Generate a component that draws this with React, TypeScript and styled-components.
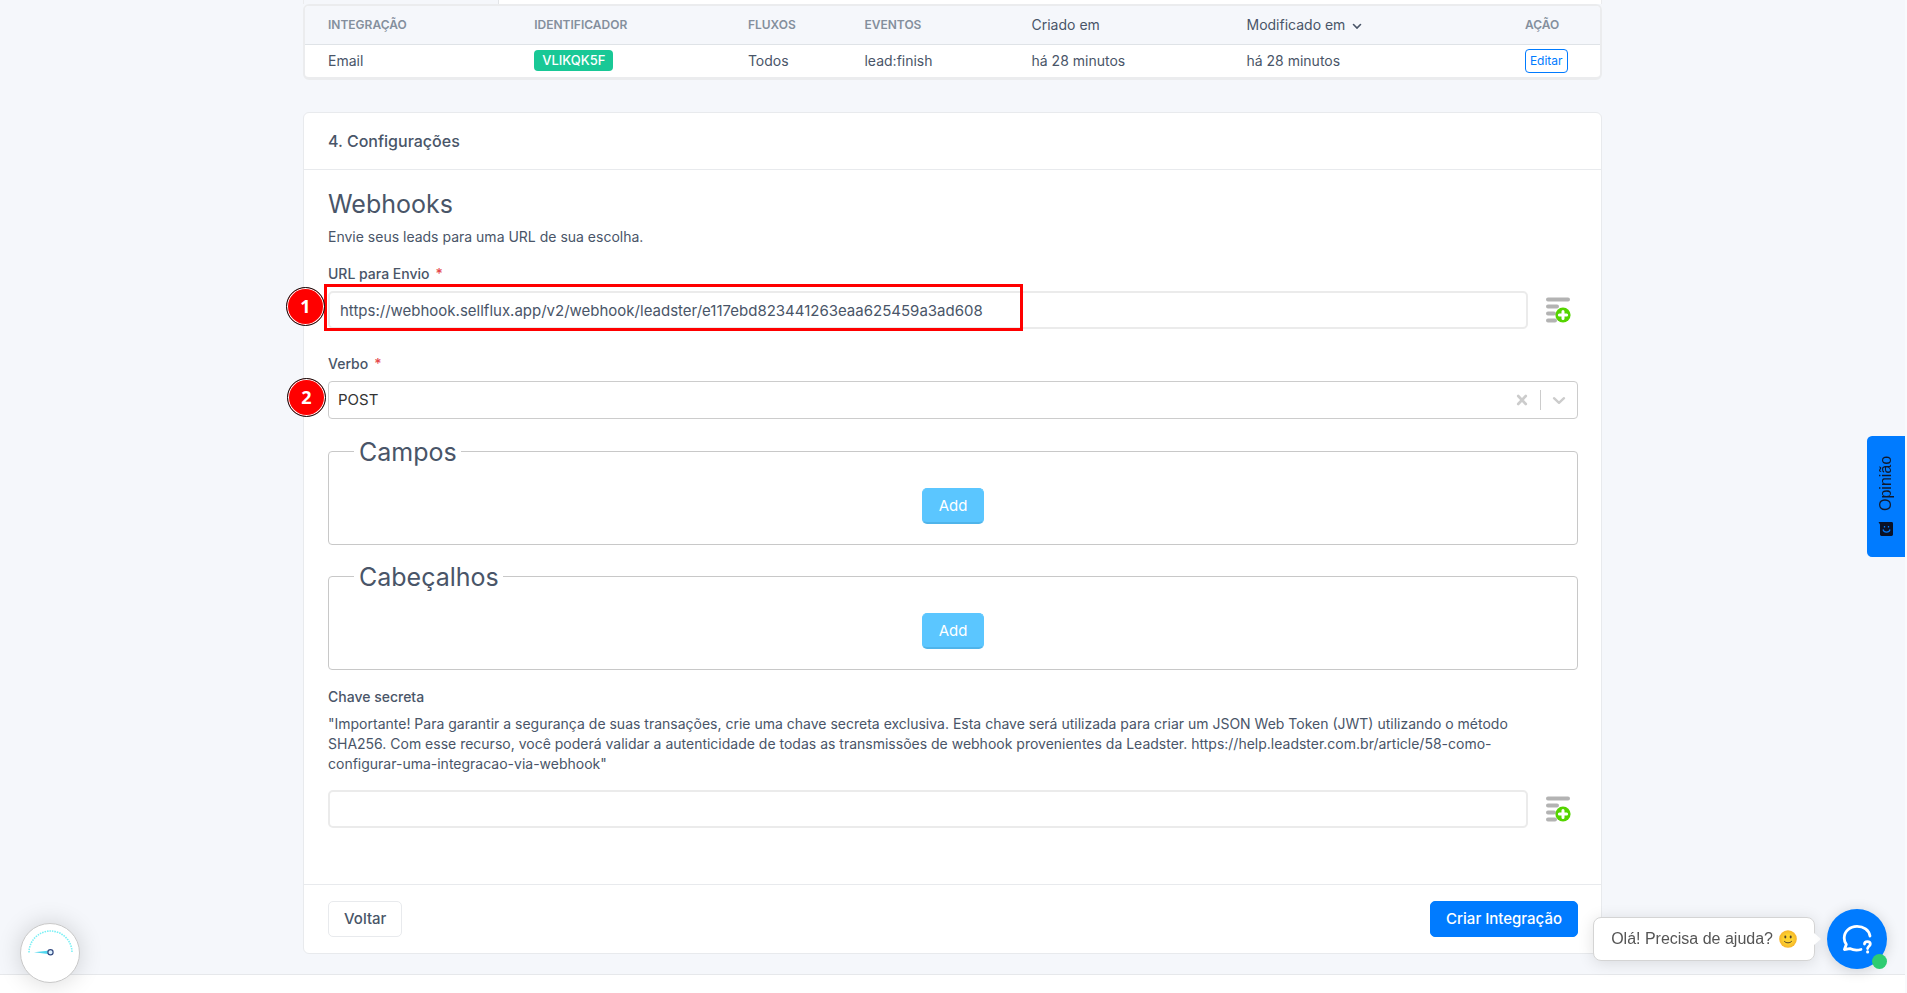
import React from 'react';
import styled, { createGlobalStyle } from 'styled-components';

const GlobalStyle = createGlobalStyle`
  *, *::before, *::after { box-sizing: border-box; }
  body {
    margin: 0;
    background: #f9fafc;
    color: #495568;
    font-family: Inter, 'Liberation Sans', sans-serif;
    font-size: 14px;
    line-height: 20px;
  }
  h1, h2, p { margin: 0; }
  button, input, select { font: inherit; color: inherit; }
  button { cursor: pointer; }
`;

const Page = styled.div`
  min-height: 100vh;
  margin-right: 2px;
  background: #f5f7fb;
  display: flex;
  flex-direction: column;
  justify-content: space-between;
`;

const Container = styled.main`
  width: 100%;
  max-width: 1299px;
  margin: 0 auto;
`;

const TabStrip = styled.div`
  height: 4px;
  display: flex;
  border: solid #ebecee;
  border-width: 0 1px;
  background: #fff;
`;

const TabEnd = styled.div`
  width: 15%;
  border-right: 1px solid #e3e5e8;
  background: #f5f7fb;
`;

const TableCard = styled.section`
  border: 2px solid #ebecee;
  border-bottom-width: 3px;
  border-radius: 6px;
  background: #fff;
  overflow: hidden;
`;

const Table = styled.table`
  width: 100%;
  border-collapse: collapse;
  table-layout: fixed;
`;

const HeadCell = styled.th<{ $plain?: boolean; $width: string }>`
  width: ${(p) => p.$width};
  height: 38px;
  padding: 0 13px;
  text-align: left;
  background: #f5f7fb;
  border-bottom: 1px solid #dfe3e7;
  font-size: ${(p) => (p.$plain ? '14px' : '12px')};
  font-weight: ${(p) => (p.$plain ? 400 : 600)};
  color: ${(p) => (p.$plain ? '#495568' : '#848f9d')};
  white-space: nowrap;
  &:first-child { padding-left: 23px; }
`;

const Cell = styled.td`
  height: 33px;
  padding: 0 13px;
  white-space: nowrap;
  &:first-child { padding-left: 23px; }
`;

const SortIcon = styled.svg`
  margin-left: 7px;
  vertical-align: middle;
`;

const Badge = styled.span`
  display: inline-block;
  padding: 0 8px;
  border-radius: 4px;
  background: #19c896;
  color: #fff;
  font-size: 13px;
  font-weight: 500;
  line-height: 21px;
`;

const EditButton = styled.button`
  display: block;
  height: 24px;
  padding: 0 4px;
  border: 1px solid #007bff;
  border-radius: 4px;
  background: #fff;
  color: #007bff;
  font-size: 12px;
  line-height: 20px;
`;

const Card = styled.section`
  margin-top: 32px;
  border: 1px solid #e8eaed;
  border-radius: 6px;
  background: #fff;
`;

const CardHeader = styled.header`
  padding: 18px 24px;
  border-bottom: 1px solid #e8eaed;
`;

const CardTitle = styled.h1`
  font-size: 16px;
  font-weight: 500;
  line-height: 20px;
`;

const CardBody = styled.form`
  padding: 19px 23px 56px 24px;
`;

const SectionTitle = styled.h2`
  margin-bottom: 8px;
  font-size: 25px;
  font-weight: 400;
  line-height: 30px;
`;

const Label = styled.label`
  display: block;
  margin-bottom: 7px;
  font-weight: 500;
`;

const Required = styled.span`
  margin-left: 6px;
  color: #e5484d;
`;

const Lead = styled.p`
  margin-bottom: 17px;
`;

const Help = styled.p`
  margin-bottom: 16px;
  padding-right: 18px;
`;

const Field = styled.div`
  margin-bottom: 25px;
`;

const SecretField = styled.div`
  padding-top: 5px;
`;

const InputRow = styled.div`
  position: relative;
  display: flex;
  align-items: center;
  gap: 18px;
  padding-right: 7px;
`;

const TextInput = styled.input`
  flex: 1;
  min-width: 0;
  height: 38px;
  padding: 0 10px;
  border: 2px solid #ebebeb;
  border-radius: 5px;
  background: #fff;
  font-size: 15px;
  outline: none;
`;

const IconButton = styled.button`
  display: flex;
  padding: 0;
  border: 0;
  background: none;
`;

const SelectBox = styled.div`
  position: relative;
  display: flex;
  align-items: center;
  height: 38px;
  margin-bottom: 13px;
  padding-right: 9px;
  border: 1px solid #ccc;
  border-radius: 4px;
  background: #fff;
  color: #ccc;
`;

const Select = styled.select`
  flex: 1;
  height: 100%;
  padding: 0 9px;
  border: 0;
  background: none;
  color: #333;
  font-size: 15px;
  appearance: none;
  outline: none;
`;

const Separator = styled.span`
  width: 1px;
  height: 20px;
  margin: 0 9px 0 8px;
  background: #ccc;
`;

const Group = styled.fieldset`
  margin: 0 0 12px;
  padding: 18px 25px 20px;
  display: flex;
  justify-content: center;
  border: 1px solid #c8c8c8;
  border-radius: 4px;
`;

const Legend = styled.legend`
  padding: 2px 4px 0 5px;
  font-size: 25px;
  line-height: 36px;
`;

const Button = styled.button<{ $kind: 'primary' | 'plain' | 'add' }>`
  height: 36px;
  padding: 0 ${(p) => (p.$kind === 'add' ? '16px' : '15px')};
  border: 1px solid ${(p) => ({ primary: '#007bff', plain: '#e8eaed', add: '#5bc6ff' })[p.$kind]};
  border-bottom: ${(p) => (p.$kind === 'add' ? '2px solid #4fb4ea' : '')};
  border-radius: 5px;
  background: ${(p) => ({ primary: '#007bff', plain: '#fff', add: '#5bc6ff' })[p.$kind]};
  color: ${(p) => (p.$kind === 'plain' ? '#495568' : '#fff')};
  font-size: 15px;
  font-weight: ${(p) => (p.$kind === 'add' ? 400 : 500)};
`;

const CardFooter = styled.footer`
  display: flex;
  justify-content: space-between;
  padding: 16px 23px 16px 24px;
  border-top: 1px solid #e8eaed;
`;

const PageFooter = styled.div`
  height: 19px;
  border-top: 1px solid #e6e8eb;
  background: #fff;
`;

const Highlight = styled.span`
  position: absolute;
  left: -4px;
  top: -7px;
  width: 699px;
  height: 47px;
  border: 3px solid #f00;
  pointer-events: none;
`;

const Step = styled.span`
  position: absolute;
  left: -42px;
  top: -4px;
  width: 39px;
  height: 39px;
  border: 1px solid #111;
  border-radius: 50%;
  background: #f00;
  box-shadow: inset 0 0 0 1px #fff;
  color: #fff;
  font: bold 18px/37px 'Open Sans', sans-serif;
  text-align: center;
`;

const Feedback = styled.button`
  position: fixed;
  right: 2px;
  top: 436px;
  width: 38px;
  height: 121px;
  display: flex;
  align-items: center;
  justify-content: center;
  gap: 10px;
  padding: 0;
  border: 0;
  border-radius: 0 5px 5px 0;
  background: #007bff;
  color: #10182a;
  font-family: 'Liberation Sans', sans-serif;
  font-size: 16px;
  writing-mode: vertical-rl;
  transform: rotate(180deg);
`;

const Gauge = styled.button`
  position: fixed;
  left: 20px;
  bottom: 10px;
  width: 60px;
  height: 60px;
  padding: 0;
  border: 1px solid #c8c8c8;
  border-radius: 50%;
  background: #fff;
  box-shadow: 0 0 24px rgba(0, 0, 0, 0.16);
`;

const Chat = styled.aside`
  position: fixed;
  right: 20px;
  bottom: 24px;
  display: flex;
  align-items: center;
  gap: 12px;
`;

const ChatMessage = styled.div`
  position: relative;
  display: flex;
  align-items: center;
  gap: 6px;
  height: 44px;
  padding: 0 17px;
  border: 1px solid #d4d4d4;
  border-radius: 8px;
  background: #fff;
  box-shadow: 0 2px 16px rgba(0, 0, 0, 0.12);
  color: #555;
  font-family: 'Liberation Sans', sans-serif;
  font-size: 16px;
  &::after {
    content: '';
    position: absolute;
    left: 100%;
    top: 15px;
    border: 6px solid transparent;
    border-left: 7px solid #fff;
  }
`;

const ChatButton = styled.button`
  position: relative;
  width: 60px;
  height: 60px;
  padding: 0;
  border: 0;
  border-radius: 50%;
  background: #007bff;
  box-shadow: 0 2px 14px rgba(0, 0, 0, 0.16);
`;

const Online = styled.span`
  position: absolute;
  right: 0;
  bottom: 0;
  width: 15px;
  height: 15px;
  border-radius: 50%;
  background: #2ecc71;
`;

const AddFieldIcon = () => (
  <svg width="25" height="26" viewBox="0 0 25 26" aria-hidden="true">
    <g stroke="#b3b3b3" strokeWidth="4" strokeLinecap="round">
      <path d="M2 2.5H22M2 9.5H11M2 16.5H8M2 23.5H9" />
    </g>
    <circle cx="17" cy="18" r="7.6" fill="#55d400" />
    <path d="M17 14.4V21.6M13.4 18H20.6" stroke="#fff" strokeWidth="3" strokeLinecap="round" />
  </svg>
);

const CloseIcon = () => (
  <svg width="20" height="20" viewBox="0 0 20 20" stroke="#ccc" strokeWidth="2.6" strokeLinecap="round" aria-hidden="true">
    <path d="M6.2 6L13.8 14M13.8 6L6.2 14" />
  </svg>
);

const ChevronIcon = () => (
  <svg width="18" height="20" viewBox="0 0 18 20" fill="none" stroke="#ccc" strokeWidth="2.4" strokeLinecap="round" strokeLinejoin="round" aria-hidden="true">
    <path d="M4 8.2L9 12.8L14 8.2" />
  </svg>
);

const SmileIcon = () => (
  <svg width="18" height="18" viewBox="0 0 18 18" aria-hidden="true">
    <defs>
      <radialGradient id="face">
        <stop offset="0.5" stopColor="#fdd32f" />
        <stop offset="1" stopColor="#f6b42b" />
      </radialGradient>
    </defs>
    <circle cx="9" cy="9" r="8.8" fill="url(#face)" />
    <ellipse cx="6.3" cy="7" rx="1" ry="1.4" fill="#54402b" />
    <ellipse cx="11.7" cy="7" rx="1" ry="1.4" fill="#54402b" />
    <path d="M5.4 11.4C7 13.4 11 13.4 12.6 11.4" fill="none" stroke="#54402b" strokeWidth="1" strokeLinecap="round" />
  </svg>
);

const ChatIcon = () => (
  <svg width="60" height="60" viewBox="0 0 60 60" fill="none" stroke="#fff" strokeWidth="2.8" strokeLinecap="round" strokeLinejoin="round" aria-hidden="true">
    <path d="M43 27C42 21 36.5 17.4 30 17.4C22.8 17.4 17.2 22.4 17.2 29C17.2 31.5 18 33.6 19.3 35.4L17.4 40.5L22.8 39.6C26.5 41.4 30.5 41.5 34 40.5" />
    <path d="M37.5 35C37.5 33.4 39 32.6 40.4 32.6C42.1 32.6 43.3 33.7 43.3 35.1C43.3 37.3 40.6 37.3 40.6 39.6" />
    <path d="M40.6 42.8V43" strokeWidth="3" />
  </svg>
);

const GaugeIcon = () => (
  <svg width="58" height="58" viewBox="0 0 58 58" aria-hidden="true">
    <path d="M8 28.5A21.5 21.5 0 0 1 51 28.5" fill="none" stroke="#7af0f5" strokeWidth="1.6" strokeDasharray="1.5 1" />
    <path d="M13 28.2L29 26.4V30.2Z" fill="#4fd6ee" />
    <circle cx="29.5" cy="28.2" r="2.6" fill="#dff2ff" stroke="#334a80" strokeWidth="1.2" />
  </svg>
);

const FaceIcon = () => (
  <svg width="16" height="16" viewBox="0 0 16 16" aria-hidden="true">
    <g transform="rotate(180 8 8)">
      <path d="M0.5 1H13.5A1.5 1.5 0 0 1 15 2.5V13.5A1.5 1.5 0 0 1 13.5 15H3.5A1.5 1.5 0 0 1 2 13.5V3.5Z" fill="#0a1226" />
      <path d="M5 8.5C5.8 12 11.2 12 12 8.5" fill="none" stroke="#007bff" strokeWidth="1.2" />
      <path d="M6.5 5V6.5M10.5 5V6.5" stroke="#007bff" strokeWidth="1.3" />
    </g>
  </svg>
);

const columns = [
  { title: 'INTEGRAÇÃO', width: '16.7%' },
  { title: 'IDENTIFICADOR', width: '16.5%' },
  { title: 'FLUXOS', width: '9%' },
  { title: 'EVENTOS', width: '12.9%' },
  { title: 'Criado em', width: '16.6%', plain: true },
  { title: 'Modificado em', width: '21.5%', plain: true, sorted: true },
  { title: 'AÇÃO', width: '6.8%' },
];

export default function App() {
  return (
    <>
      <GlobalStyle />
      <Page>
        <Container>
          <TabStrip>
            <TabEnd />
          </TabStrip>
          <TableCard>
            <Table>
              <thead>
                <tr>
                  {columns.map((c) => (
                    <HeadCell key={c.title} $width={c.width} $plain={c.plain} scope="col">
                      {c.title}
                      {c.sorted && (
                        <SortIcon width="10" height="10" viewBox="0 0 10 10" fill="none" stroke="#495568" strokeWidth="1.6" strokeLinecap="round" aria-hidden="true">
                          <path d="M1.5 3.5L5 7L8.5 3.5" />
                        </SortIcon>
                      )}
                    </HeadCell>
                  ))}
                </tr>
              </thead>
              <tbody>
                <tr>
                  <Cell>Email</Cell>
                  <Cell>
                    <Badge>VLIKQK5F</Badge>
                  </Cell>
                  <Cell>Todos</Cell>
                  <Cell>lead:finish</Cell>
                  <Cell>há 28 minutos</Cell>
                  <Cell>há 28 minutos</Cell>
                  <Cell>
                    <EditButton type="button">Editar</EditButton>
                  </Cell>
                </tr>
              </tbody>
            </Table>
          </TableCard>

          <Card>
            <CardHeader>
              <CardTitle>4. Configurações</CardTitle>
            </CardHeader>
            <CardBody id="webhook-form">
              <SectionTitle>Webhooks</SectionTitle>
              <Lead>Envie seus leads para uma URL de sua escolha.</Lead>
              <Field>
                <Label htmlFor="url">
                  URL para Envio<Required>*</Required>
                </Label>
                <InputRow>
                  <TextInput id="url" type="text" defaultValue="https://webhook.sellflux.app/v2/webhook/leadster/e117ebd823441263eaa625459a3ad608" />
                  <IconButton type="button" aria-label="Inserir variável">
                    <AddFieldIcon />
                  </IconButton>
                  <Highlight />
                  <Step>1</Step>
                </InputRow>
              </Field>
              <Label htmlFor="verb">
                Verbo<Required>*</Required>
              </Label>
              <SelectBox>
                <Select id="verb" defaultValue="POST">
                  <option>POST</option>
                </Select>
                <IconButton type="button" aria-label="Limpar">
                  <CloseIcon />
                </IconButton>
                <Separator />
                <ChevronIcon />
                <Step>2</Step>
              </SelectBox>
              <Group>
                <Legend>Campos</Legend>
                <Button type="button" $kind="add">Add</Button>
              </Group>
              <Group>
                <Legend>Cabeçalhos</Legend>
                <Button type="button" $kind="add">Add</Button>
              </Group>
              <SecretField>
                <Label htmlFor="secret">Chave secreta</Label>
                <Help>
                  "Importante! Para garantir a segurança de suas transações, crie uma chave secreta exclusiva. Esta chave será utilizada para criar um JSON Web Token (JWT) utilizando o método SHA256. Com esse recurso, você poderá validar a autenticidade de todas as transmissões de webhook provenientes da Leadster. https://help.leadster.com.br/article/58-como-configurar-uma-integracao-via-webhook"
                </Help>
                <InputRow>
                  <TextInput id="secret" type="text" />
                  <IconButton type="button" aria-label="Inserir variável">
                    <AddFieldIcon />
                  </IconButton>
                </InputRow>
              </SecretField>
            </CardBody>
            <CardFooter>
              <Button type="button" $kind="plain">Voltar</Button>
              <Button type="submit" form="webhook-form" $kind="primary">Criar Integração</Button>
            </CardFooter>
          </Card>
        </Container>
        <PageFooter />
      </Page>

      <Feedback type="button">
        <FaceIcon />
        Opinião
      </Feedback>
      <Gauge type="button" aria-label="Desempenho">
        <GaugeIcon />
      </Gauge>
      <Chat>
        <ChatMessage>
          Olá! Precisa de ajuda?
          <SmileIcon />
        </ChatMessage>
        <ChatButton type="button" aria-label="Abrir chat">
          <ChatIcon />
          <Online />
        </ChatButton>
      </Chat>
    </>
  );
}
